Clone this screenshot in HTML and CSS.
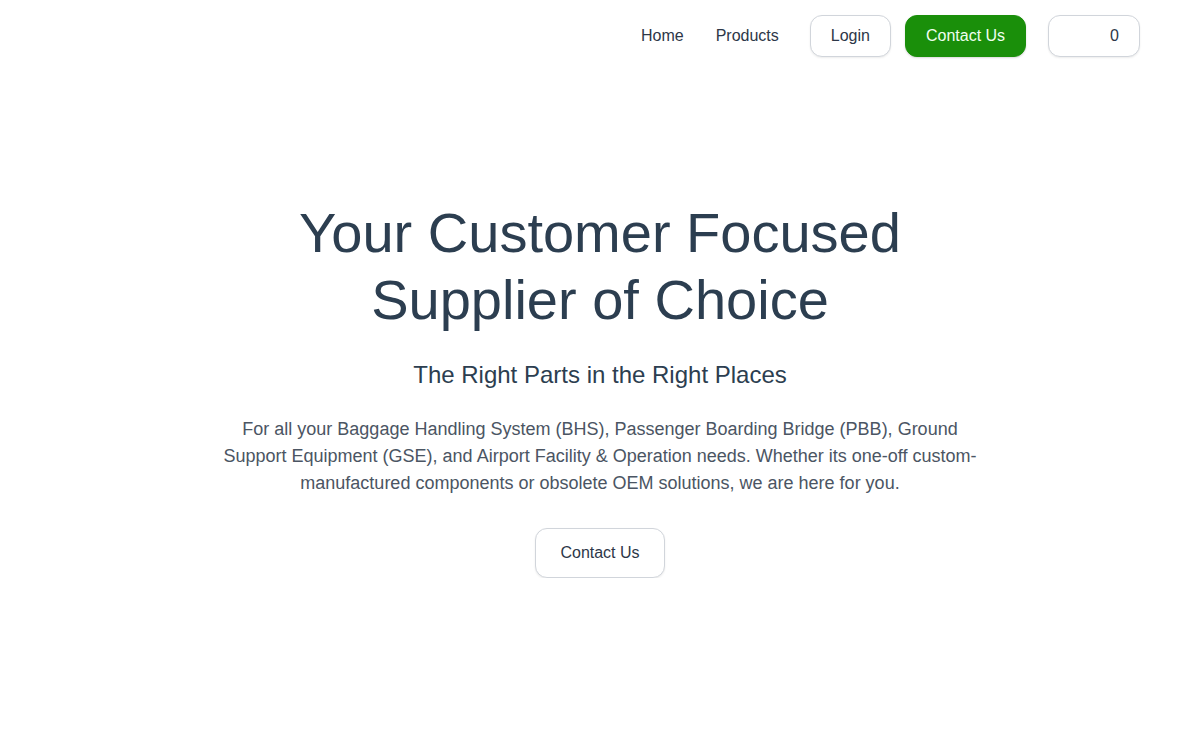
FILE: index.html
```html
<!DOCTYPE html>
<html lang="en">
<head>
<meta charset="utf-8">
<title>Supplier of Choice</title>
<link rel="stylesheet" href="styles.css">
</head>
<body>
<header class="header">
  <nav class="nav">
    <a class="nav-link" href="#">Home</a>
    <a class="nav-link" href="#">Products</a>
    <div class="actions">
      <a class="btn btn-outline" href="#">Login</a>
      <a class="btn btn-green" href="#">Contact Us</a>
      <a class="btn btn-outline cart" href="#"><span class="cart-space"></span><span>0</span></a>
    </div>
  </nav>
</header>
<main class="hero">
  <h1 class="title">Your Customer Focused<br>Supplier of Choice</h1>
  <h2 class="subtitle">The Right Parts in the Right Places</h2>
  <p class="lead">For all your Baggage Handling System (BHS), Passenger Boarding Bridge (PBB), Ground Support Equipment (GSE), and Airport Facility &amp; Operation needs. Whether its one-off custom-manufactured components or obsolete OEM solutions, we are here for you.</p>
  <a class="btn btn-outline btn-lg" href="#">Contact Us</a>
</main>
</body>
</html>
```
FILE: styles.css
```css
* { box-sizing: border-box; }
html, body { margin: 0; padding: 0; }
body {
  font-family: "Liberation Sans", Arial, sans-serif;
  background: #ffffff;
  color: #2c3e50;
}
a { text-decoration: none; }
.header {
  display: flex;
  justify-content: flex-end;
  padding: 15px 60px 0 0;
}
.nav {
  display: flex;
  align-items: center;
  gap: 32px;
}
.nav-link {
  font-size: 16px;
  line-height: 24px;
  color: #2d3748;
}
.actions {
  display: flex;
  align-items: center;
  gap: 14px;
  margin-left: -1px;
}
.actions .cart { margin-left: 8px; }
.btn {
  display: inline-flex;
  align-items: center;
  font-size: 16px;
  line-height: 24px;
  padding: 8px 20px;
  border-radius: 12px;
  border: 1px solid #d1d5db;
}
.btn-outline {
  background: #fff;
  color: #2d3748;
  box-shadow: 0 1px 2px rgba(0,0,0,0.08);
}
.btn-green {
  background: #1a8f0a;
  border-color: #1a8f0a;
  color: #f0fff0;
  box-shadow: 0 1px 2px rgba(0,0,0,0.15);
}
.cart-space {
  display: inline-block;
  width: 41px;
  height: 24px;
}
.hero {
  display: flex;
  flex-direction: column;
  align-items: center;
  text-align: center;
  padding-top: 142px;
}
.title {
  margin: 0;
  font-size: 56px;
  line-height: 67px;
  font-weight: 400;
  color: #2c3e50;
}
.subtitle {
  margin: 26px 0 0;
  font-size: 24px;
  line-height: 32px;
  font-weight: 400;
  color: #2c3e50;
}
.lead {
  margin: 25px 0 0;
  max-width: 770px;
  font-size: 18px;
  line-height: 27px;
  color: #4b5563;
}
.btn-lg {
  margin-top: 31px;
  padding: 12px 24px;
}
```
